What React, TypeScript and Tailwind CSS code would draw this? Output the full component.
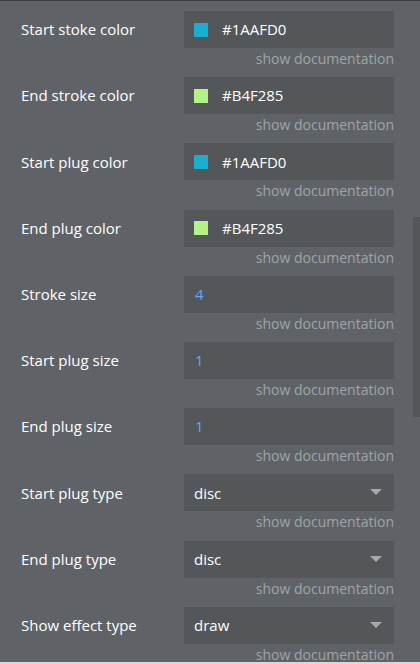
import React from 'react';

type Field =
  | { label: string; kind: 'color'; value: string; swatch: string }
  | { label: string; kind: 'number'; value: string }
  | { label: string; kind: 'select'; value: string };

const fields: Field[] = [
  { label: 'Start stoke color', kind: 'color', value: '#1AAFD0', swatch: '#1AAFD0' },
  { label: 'End stroke color', kind: 'color', value: '#B4F285', swatch: '#B4F285' },
  { label: 'Start plug color', kind: 'color', value: '#1AAFD0', swatch: '#1AAFD0' },
  { label: 'End plug color', kind: 'color', value: '#B4F285', swatch: '#B4F285' },
  { label: 'Stroke size', kind: 'number', value: '4' },
  { label: 'Start plug size', kind: 'number', value: '1' },
  { label: 'End plug size', kind: 'number', value: '1' },
  { label: 'Start plug type', kind: 'select', value: 'disc' },
  { label: 'End plug type', kind: 'select', value: 'disc' },
  { label: 'Show effect type', kind: 'select', value: 'draw' },
];

function FieldInput({ field }: { field: Field }) {
  if (field.kind === 'color') {
    return (
      <div className="flex items-center h-[37px] bg-[#53575a] pl-[10px]">
        <span className="w-[14px] h-[14px] mr-[14px]" style={{ background: field.swatch }} />
        <span className="text-[15px] text-white">{field.value}</span>
      </div>
    );
  }
  if (field.kind === 'number') {
    return (
      <div className="flex items-center h-[37px] bg-[#53575a] pl-[11px]">
        <span className="text-[15px] text-[#62aaf6]">{field.value}</span>
      </div>
    );
  }
  return (
    <div className="flex items-center justify-between h-[37px] bg-[#53575a] pl-[10px] pr-[12px]">
      <span className="text-[15px] text-white">{field.value}</span>
      <svg width="12" height="7" viewBox="0 0 12 7">
        <path d="M0 0 H12 L6 6 Z" fill="#a7aaac" />
      </svg>
    </div>
  );
}

function PropertyRow({ field }: { field: Field }) {
  return (
    <div className="flex pt-[11px]">
      <div className="w-[184px] pl-[21px] h-[37px] flex items-center text-[15px] text-white">
        {field.label}
      </div>
      <div className="w-[210px] flex flex-col">
        <FieldInput field={field} />
        <div className="pt-[3px] text-right text-[14px] leading-[15.2px] text-[#a0a4a7]">
          show documentation
        </div>
      </div>
    </div>
  );
}

export default function App() {
  return (
    <div
      className="relative w-[420px] h-[664px] overflow-hidden bg-[#5f6367]"
      style={{ fontFamily: '"Open Sans", sans-serif' }}
    >
      <div className="absolute left-0 right-0 top-0 h-px bg-[#3b3e41]" />
      <div className="flex flex-col">
        {fields.map((f) => (
          <PropertyRow key={f.label} field={f} />
        ))}
      </div>
      {/* scrollbar */}
      <div className="absolute right-0 top-[217px] w-[7px] h-[200px] bg-[#53575a]" />
      <div className="absolute left-0 right-0 bottom-0 h-[2px] bg-[#d9d9d9]" />
    </div>
  );
}
